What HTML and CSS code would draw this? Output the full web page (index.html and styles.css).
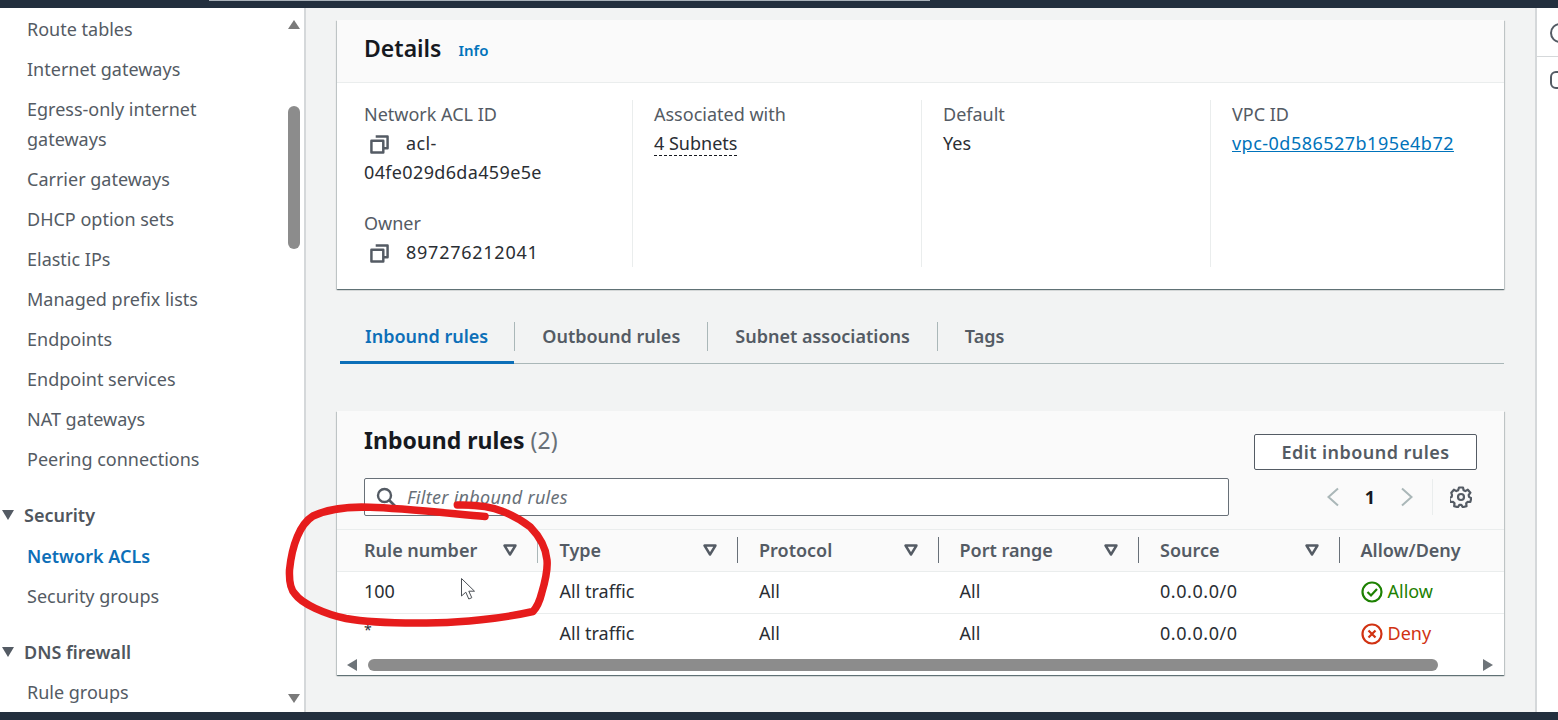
FILE: index.html
```html
<!DOCTYPE html>
<html lang="en">
<head>
  <meta charset="UTF-8">
  <meta name="viewport" content="width=device-width, initial-scale=1.0">
  <title>Network ACL</title>
  <link rel="stylesheet" href="styles.css">
</head>
<body>
  <svg class="defs" width="0" height="0">
    <symbol id="copy" viewBox="0 0 20 20">
      <path d="M6 1.500h12.500v12.500H14M1.500 6H14v12.500H1.500z" fill="none" stroke="currentColor" stroke-width="2.600" stroke-linejoin="round"/>
    </symbol>
    <symbol id="sort" viewBox="0 0 14 12">
      <path d="M1.500 1.500h11L7 10.500z" fill="none" stroke="currentColor" stroke-width="2.400" stroke-linejoin="round"/>
    </symbol>
  </svg>

  <header class="topbar"><div class="top-search"></div></header>

  <div class="app">
    <nav class="sidenav">
      <ul class="nav-list">
        <li>Route tables</li>
        <li>Internet gateways</li>
        <li>Egress-only internet gateways</li>
        <li>Carrier gateways</li>
        <li>DHCP option sets</li>
        <li>Elastic IPs</li>
        <li>Managed prefix lists</li>
        <li>Endpoints</li>
        <li>Endpoint services</li>
        <li>NAT gateways</li>
        <li>Peering connections</li>
      </ul>
      <h3 class="nav-head"><span class="caret"></span>Security</h3>
      <ul class="nav-list">
        <li class="active">Network ACLs</li>
        <li>Security groups</li>
      </ul>
      <h3 class="nav-head"><span class="caret"></span>DNS firewall</h3>
      <ul class="nav-list">
        <li>Rule groups</li>
      </ul>
      <div class="nav-scroll">
        <span class="arrow-up"></span>
        <span class="thumb"></span>
        <span class="arrow-down"></span>
      </div>
    </nav>

    <main class="content">
      <section class="card details">
        <div class="details-head">
          <h2>Details</h2>
          <a class="info">Info</a>
        </div>
        <div class="details-body">
          <div class="col">
            <div class="label">Network ACL ID</div>
            <div class="value acl"><svg class="copy"><use href="#copy"/></svg>acl-04fe029d6da459e5e</div>
            <div class="label owner">Owner</div>
            <div class="value account"><svg class="copy"><use href="#copy"/></svg>897276212041</div>
          </div>
          <div class="col">
            <div class="label">Associated with</div>
            <div class="value"><span class="dotted">4 Subnets</span></div>
          </div>
          <div class="col">
            <div class="label">Default</div>
            <div class="value">Yes</div>
          </div>
          <div class="col">
            <div class="label">VPC ID</div>
            <div class="value"><a class="link">vpc-0d586527b195e4b72</a></div>
          </div>
        </div>
      </section>

      <div class="tabs">
        <div class="tab active">Inbound rules</div>
        <div class="tab">Outbound rules</div>
        <div class="tab">Subnet associations</div>
        <div class="tab">Tags</div>
      </div>

      <section class="card rules">
        <div class="rules-head">
          <div class="title-row">
            <h2>Inbound rules <span class="count">(2)</span></h2>
            <button class="edit">Edit inbound rules</button>
          </div>
          <div class="filter-row">
            <div class="filter">
              <svg class="search" viewBox="0 0 20 20"><circle cx="8.500" cy="8.500" r="6.500" fill="none" stroke="currentColor" stroke-width="2.400"/><path d="M13.500 13.500l5.500 5.500" stroke="currentColor" stroke-width="2.600"/></svg>
              <span>Filter inbound rules</span>
            </div>
            <div class="pager">
              <svg class="chev" viewBox="0 0 14 20"><path d="M12 1.500L2.500 10l9.500 8.500" fill="none" stroke="currentColor" stroke-width="2"/></svg>
              <span class="page">1</span>
              <svg class="chev" viewBox="0 0 14 20"><path d="M2 1.500L11.500 10 2 18.500" fill="none" stroke="currentColor" stroke-width="2"/></svg>
              <span class="gear-wrap">
                <svg class="gear" viewBox="0 0 22 22"><path d="M9 1.500h4l.6 2.800 1.700.8 2.500-1.400 2.600 3-1.700 2.300.3 1.900 2.300 1.300-1 3.800-2.800-.1-1.300 1.400.3 2.800-3.700 1.100-1.500-2.300h-1.900l-1.500 2.300-3.700-1.100.3-2.800-1.300-1.400-2.800.1-1-3.800 2.300-1.300.3-1.900L1.300 6.700l2.600-3 2.500 1.400 1.700-.8z" fill="none" stroke="currentColor" stroke-width="2.200" stroke-linejoin="round"/><circle cx="11" cy="11" r="3" fill="none" stroke="currentColor" stroke-width="2.200"/></svg>
              </span>
            </div>
          </div>
        </div>

        <table class="rules-table">
          <thead>
            <tr>
              <th><div class="th">Rule number<svg class="sort"><use href="#sort"/></svg></div></th>
              <th><div class="th">Type<svg class="sort"><use href="#sort"/></svg></div></th>
              <th><div class="th">Protocol<svg class="sort"><use href="#sort"/></svg></div></th>
              <th><div class="th">Port range<svg class="sort"><use href="#sort"/></svg></div></th>
              <th><div class="th">Source<svg class="sort"><use href="#sort"/></svg></div></th>
              <th class="last"><div class="th">Allow/Deny</div></th>
            </tr>
          </thead>
          <tbody>
            <tr>
              <td>100</td>
              <td>All traffic</td>
              <td>All</td>
              <td>All</td>
              <td class="cidr">0.0.0.0/0</td>
              <td class="allow">
                <svg class="status" viewBox="0 0 22 22"><circle cx="11" cy="11" r="9.500" fill="none" stroke="currentColor" stroke-width="2.200"/><path d="M6.500 11l3.500 3.500 6-6.500" fill="none" stroke="currentColor" stroke-width="2.200"/></svg>Allow
              </td>
            </tr>
            <tr>
              <td><span class="star">*</span></td>
              <td>All traffic</td>
              <td>All</td>
              <td>All</td>
              <td class="cidr">0.0.0.0/0</td>
              <td class="deny">
                <svg class="status" viewBox="0 0 22 22"><circle cx="11" cy="11" r="9.500" fill="none" stroke="currentColor" stroke-width="2.200"/><path d="M7.500 7.500l7 7m0-7l-7 7" fill="none" stroke="currentColor" stroke-width="2.200"/></svg>Deny
              </td>
            </tr>
          </tbody>
        </table>

        <div class="table-scroll">
          <span class="arrow-left"></span>
          <span class="bar"></span>
          <span class="arrow-right"></span>
        </div>
      </section>
    </main>

    <aside class="rail">
      <div class="rail-item"><span class="rail-round"></span></div>
      <div class="rail-item"><span class="rail-hex"></span></div>
    </aside>
  </div>

  <footer class="bottombar"></footer>

  <!-- pen mark and mouse pointer drawn over the video -->
  <svg class="overlay" width="1558" height="720" viewBox="0 0 1558 720">
    <path d="M485 516.500C455 514 400 508 370 507.300C350 506.500 330 508 313 516C300 524 292 545 289.500 570C289 582 291 590 295 594C302 604 325 614 346 618.500C365 622 400 623.500 437 622.800C460 622.500 500 619 533 611.500C538 606 540 600 541.700 593C545 582 548 570 547 560C546 548 540 537 530 526.700C520 519 512 515 503 511.500C490 506 475 504.500 457.300 505" fill="none" stroke="#e61c1c" stroke-width="7.500" stroke-linecap="round" stroke-linejoin="round"/>
    <path d="M461.500 578.500v17.500l4.300-3.800 3 6.800 3-1.300-3-6.500h5.700z" fill="#fff" stroke="#4a4f55" stroke-width="1"/>
  </svg>
</body>
</html>
```

FILE: styles.css
```css
* {
  box-sizing: border-box;
}

html, body {
  margin: 0;
  height: 720px;
  overflow: hidden;
}

body {
  display: flex;
  flex-direction: column;
  font-family: "Noto Sans", "Open Sans", sans-serif;
  font-size: 18px;
  color: #2a2e33;
  background: #f2f3f3;
}

.defs {
  position: absolute;
}

.topbar {
  height: 8px;
  flex: none;
  background: #232f3e;
}

.top-search {
  width: 721px;
  height: 1px;
  margin-left: 209px;
  background: #aab2ba;
}

.bottombar {
  height: 8px;
  flex: none;
  background: #232f3e;
}

.app {
  flex: 1;
  min-height: 0;
  display: flex;
}

/* left nav */
.sidenav {
  position: relative;
  width: 306px;
  flex: none;
  padding-top: 1px;
  background: #fff;
  border-right: 2px solid #d5d8da;
  overflow: hidden;
  color: #545b64;
}

.nav-list {
  list-style: none;
  margin: 0;
  padding: 0 90px 0 27px;
}

.nav-list li {
  padding: 5px 0;
  line-height: 30px;
}

.nav-list li.active {
  font-weight: 600;
  color: #0d6fb8;
}

.nav-head {
  display: flex;
  align-items: center;
  height: 41px;
  margin: 15.500px 0 0;
  padding-left: 2px;
  font-size: 18px;
  font-weight: 600;
  color: #50565e;
}

.caret {
  width: 0;
  height: 0;
  margin-right: 10px;
  border-style: solid;
  border-width: 10px 6.500px 0;
  border-color: #545b64 transparent transparent;
}

.nav-scroll {
  position: absolute;
  top: 0;
  right: 3px;
  bottom: 0;
  width: 13px;
}

.nav-scroll span {
  position: absolute;
  left: 0;
}

.arrow-up {
  top: 12px;
  border-style: solid;
  border-width: 0 6.500px 9px;
  border-color: transparent transparent #7a7a7a;
}

.arrow-down {
  bottom: 9px;
  border-style: solid;
  border-width: 9px 6.500px 0;
  border-color: #7a7a7a transparent transparent;
}

.thumb {
  top: 98px;
  width: 12px;
  height: 143px;
  border-radius: 6px;
  background: #8c8c8c;
}

/* main column */
.content {
  flex: 1;
  min-width: 0;
  padding: 12px 31px 0;
}

.card {
  background: #fff;
  box-shadow: 0 1px 1px rgba(0, 28, 36, 0.45), 1px 1px 1px rgba(0, 28, 36, 0.15), -1px 1px 1px rgba(0, 28, 36, 0.15);
}

.details-head {
  display: flex;
  align-items: center;
  height: 63px;
  padding: 0 27px 7px;
  background: #fafafa;
  border-bottom: 1px solid #eaeded;
}

.details-head h2 {
  margin: 0;
  font-size: 23px;
  font-weight: 600;
  color: #16191f;
}

.info {
  margin: 4px 0 0 17px;
  font-size: 15px;
  font-weight: 600;
  color: #0073bb;
}

.details-body {
  display: grid;
  grid-template-columns: 295px 289px 289px 1fr;
  height: 206px;
  padding: 17px 0 22px;
}

.col {
  padding-left: 21px;
  border-left: 1px solid #eaeded;
}

.col:first-child {
  padding: 0 27px;
  border-left: 0;
}

.label {
  line-height: 29px;
  color: #545b64;
}

.owner {
  margin-top: 22px;
}

.value {
  line-height: 29px;
}

.acl {
  letter-spacing: 0.35px;
}

.account {
  letter-spacing: 0.75px;
}

.copy {
  width: 19px;
  height: 19px;
  margin: 0 17px 0 6px;
  vertical-align: -4px;
  color: #545b64;
}

.dotted {
  border-bottom: 1px dashed #16191f;
}

.link {
  color: #0073bb;
  text-decoration: underline;
  letter-spacing: 0.48px;
}

/* tabs */
.tabs {
  display: flex;
  margin: 33px 0 47px 3px;
  height: 42px;
  border-bottom: 1px solid #aab7b8;
}

.tab {
  position: relative;
  height: 29px;
  padding: 0 27px;
  line-height: 29px;
  font-weight: 600;
  color: #545b64;
  border-left: 1px solid #aab7b8;
}

.tab:first-child {
  padding: 0 26px 0 25px;
  border-left: 0;
}

.tab.active {
  color: #0d6fb8;
}

.tab.active::after {
  content: "";
  position: absolute;
  left: 0;
  right: 0;
  top: 39px;
  height: 3px;
  background: #0d6fb8;
}

/* rules table */
.rules-head {
  height: 119px;
  padding: 14px 27px 0;
  background: #fafafa;
  border-bottom: 1px solid #eaeded;
}

.title-row {
  display: flex;
  justify-content: space-between;
  align-items: flex-start;
}

.title-row h2 {
  margin: 0;
  line-height: 30px;
  font-size: 23px;
  font-weight: 700;
  color: #16191f;
}

.count {
  font-weight: 400;
  color: #687078;
}

.edit {
  width: 223px;
  height: 36px;
  margin-top: 9px;
  padding: 0;
  font: 600 18px "Noto Sans", sans-serif;
  letter-spacing: 0.45px;
  color: #545b64;
  background: #fff;
  border: 1px solid #545b64;
  border-radius: 2px;
}

.filter-row {
  display: flex;
  align-items: center;
  margin-top: 8px;
}

.filter {
  display: flex;
  align-items: center;
  width: 865px;
  height: 38px;
  padding-left: 11px;
  background: #fff;
  border: 1px solid #687078;
  border-radius: 2px;
  font-style: italic;
  letter-spacing: 0.28px;
  color: #687078;
}

.search {
  width: 20px;
  height: 20px;
  margin-right: 11px;
  color: #545b64;
}

.pager {
  display: flex;
  align-items: center;
  margin-left: 97px;
  color: #aab7b8;
}

.chev {
  width: 14px;
  height: 20px;
}

.page {
  width: 60px;
  text-align: center;
  font-weight: 700;
  color: #16191f;
}

.gear-wrap {
  display: flex;
  align-items: center;
  height: 36px;
  margin-left: 18px;
  padding-left: 17px;
  border-left: 1px solid #eaeded;
}

.gear {
  width: 22px;
  height: 22px;
  color: #545b64;
}

.rules-table {
  width: 100%;
  table-layout: fixed;
  border-collapse: collapse;
}

.rules-table th {
  width: 200.500px;
  height: 41px;
  padding: 0;
  text-align: left;
  background: #fafafa;
  border-bottom: 1px solid #eaeded;
}

.rules-table th.last {
  width: auto;
}

.th {
  display: flex;
  align-items: center;
  justify-content: space-between;
  height: 26px;
  padding: 0 20px 0 21px;
  font-weight: 600;
  color: #545b64;
  border-right: 1px solid #687078;
}

th:first-child .th {
  padding-left: 27px;
  border-right-color: #aab7b8;
}

th:nth-child(2) .th, td:nth-child(2) {
  padding-left: 22px;
}

th:last-child .th {
  border-right: 0;
}

.sort {
  width: 14px;
  height: 12px;
  color: #545b64;
}

.rules-table td {
  height: 42px;
  padding: 0 0 2px 21px;
  border-bottom: 1px solid #eaeded;
  white-space: nowrap;
}

.rules-table td:first-child {
  padding-left: 27px;
}

.rules-table td:nth-child(2) {
  padding-left: 22px;
}

.rules-table tr:last-child td {
  border-bottom: 0;
}

.star {
  display: block;
  font-size: 14px;
  line-height: 14px;
  margin-top: -6px;
}

.cidr {
  letter-spacing: 0.55px;
}

.status {
  width: 22px;
  height: 22px;
  margin-right: 5px;
  vertical-align: -5px;
}

td.allow {
  color: #1d8102;
}

td.deny {
  color: #d13212;
}

.table-scroll {
  display: flex;
  align-items: center;
  height: 20px;
  padding: 0 11px 0 10px;
  background: #fff;
}

.bar {
  width: 1071px;
  height: 12px;
  margin: 0 45px 0 11px;
  border-radius: 6px;
  background: #8c8c8c;
}

.arrow-left {
  border-style: solid;
  border-width: 6px 10px 6px 0;
  border-color: transparent #6e7479 transparent transparent;
}

.arrow-right {
  border-style: solid;
  border-width: 6px 0 6px 10px;
  border-color: transparent transparent transparent #6e7479;
}

/* right rail, cut off by the window edge */
.rail {
  width: 23px;
  flex: none;
  background: #fff;
  border-left: 2px solid #d5d8da;
  overflow: hidden;
}

.rail-item {
  height: 49px;
  padding: 15px 0 0 13px;
}

.rail-item:first-child {
  border-bottom: 1px solid #d5d8da;
}

.rail-round, .rail-hex {
  display: block;
  width: 20px;
  height: 20px;
  border: 2px solid #545b64;
  border-radius: 50%;
}

.rail-hex {
  height: 18px;
  margin-top: -1px;
  border-radius: 6px;
}

.overlay {
  position: absolute;
  left: 0;
  top: 0;
  pointer-events: none;
}
```
